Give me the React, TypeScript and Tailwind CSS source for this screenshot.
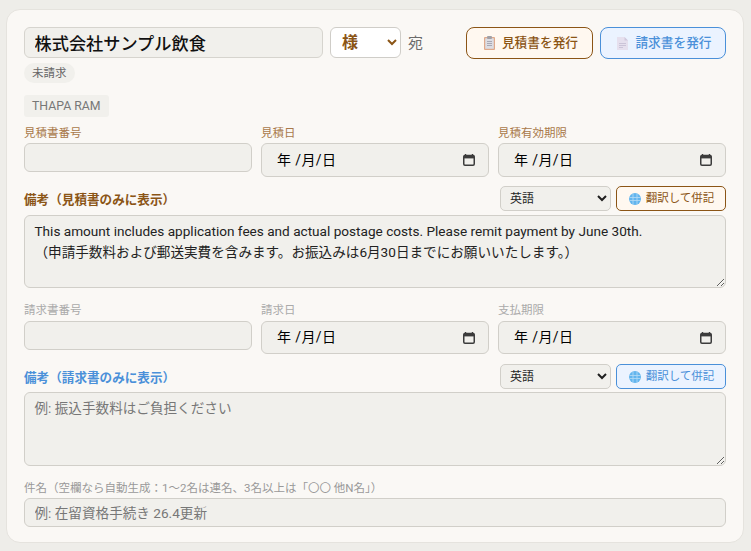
import React from "react";

const font = { fontFamily: '"Roboto","Noto Sans CJK JP",sans-serif' };

function ClipIcon() {
  return (
    <svg width="11" height="14" viewBox="0 0 11 14" className="shrink-0">
      <rect x="0" y="1" width="11" height="13" rx="1" fill="#dfa98a" />
      <rect x="1.2" y="2.2" width="8.6" height="10.6" fill="#dcdde3" />
      <rect x="3" y="0" width="5" height="3" rx="1" fill="#a2a0a6" />
      <path d="M3 5.5h5M3 7.5h5M3 9.5h5" stroke="#a9a8b4" strokeWidth="1" />
    </svg>
  );
}

function DocIcon() {
  return (
    <svg width="11" height="13" viewBox="0 0 11 13" className="shrink-0">
      <path d="M0 0h7.5l3.5 3.5V13H0z" fill="#e6e0ee" />
      <path d="M7.5 0l3.5 3.5H7.5z" fill="#cfc8dc" />
      <path d="M2 6.5h7M2 8.5h7M2 10.5h4" stroke="#cbc4d8" strokeWidth="1" />
    </svg>
  );
}

function GlobeIcon() {
  return (
    <svg width="12" height="12" viewBox="0 0 12 12" className="shrink-0">
      <circle cx="6" cy="6" r="6" fill="#62b5ee" />
      <path d="M0.5 4.5h11M0.5 7.5h11M4 0.8v10.4M8 0.8v10.4" stroke="#b6dcf5" strokeWidth="0.8" fill="none" />
    </svg>
  );
}

function CalendarIcon() {
  return (
    <svg width="12" height="12" viewBox="0 0 12 12" className="shrink-0">
      <path d="M2.5 0v2M9.5 0v2" stroke="#3c3c3c" strokeWidth="1.4" />
      <rect x="0.75" y="1.5" width="10.5" height="9.75" rx="1.2" fill="none" stroke="#3c3c3c" strokeWidth="1.5" />
      <rect x="0.75" y="2" width="10.5" height="2.4" fill="#3c3c3c" />
    </svg>
  );
}

function DateField({ label, labelClass, heightClass, gapClass }: { label: string; labelClass: string; heightClass: string; gapClass: string }) {
  return (
    <div className="flex flex-col">
      <label className={`h-[16px] text-[11.5px] leading-[16px] ${gapClass} ${labelClass}`}>{label}</label>
      <div className={`flex w-full items-center justify-between rounded-md border border-[#d1cfc9] bg-[#f1f0ec] pl-[15px] pr-[13px] text-[14px] tracking-[0.4px] text-black ${heightClass}`}>
        <span className="whitespace-pre">年 /月/日</span>
        <CalendarIcon />
      </div>
    </div>
  );
}

function TextField({ label, labelClass, gapClass }: { label: string; labelClass: string; gapClass: string }) {
  return (
    <div className="flex flex-col">
      <label className={`h-[16px] text-[11.5px] leading-[16px] ${gapClass} ${labelClass}`}>{label}</label>
      <input
        type="text"
        className="h-[29px] w-full rounded-md border border-[#d1cfc9] bg-[#f1f0ec] px-[10px] text-[13.6px] outline-none"
        style={font}
      />
    </div>
  );
}

function TranslateRow({ title, titleClass, btnClass, textClass }: { title: string; titleClass: string; btnClass: string; textClass: string }) {
  return (
    <div className="flex h-[26px] items-start justify-between">
      <span className={`mt-[4px] text-[12.6px] font-bold leading-[20px] ${titleClass}`}>{title}</span>
      <div className="flex items-start gap-[5px]">
        <select
          defaultValue="英語"
          className="h-[25px] w-[111px] rounded-[5px] border border-[#d1cfc9] bg-[#f1f0ec] pl-[5px] text-[12px] text-[#1f1f1f] outline-none"
          style={font}
        >
          <option>英語</option>
        </select>
        <button className={`flex h-[25px] w-[110px] items-center justify-center gap-[5px] rounded-[5px] border pl-[1px] text-[11.5px] ${btnClass}`}>
          <GlobeIcon />
          <span className={textClass}>翻訳して併記</span>
        </button>
      </div>
    </div>
  );
}

export default function App() {
  return (
    <div className="h-[551px] w-[751px] overflow-hidden bg-[#eeede9] pl-[6px] pr-[7px] pt-[9px]" style={font}>
      <div className="h-[534px] rounded-[14px] border border-[#e5e3de] bg-[#faf8f5] px-[17px] pt-[17px]">
        <div className="flex items-start">
          <input
            defaultValue="株式会社サンプル飲食"
            className="h-[31px] w-[299px] rounded-md border border-[#d6d4ce] bg-[#f1f0ec] px-[9.5px] text-[17.2px] font-medium text-[#111] outline-none"
            style={font}
          />
          <select
            defaultValue="様"
            className="ml-[7px] h-[31px] w-[71px] rounded-md border border-[#cfcdc8] bg-white pl-[7px] text-[16px] font-bold text-[#8b5516] outline-none"
            style={font}
          >
            <option>様</option>
          </select>
          <span className="ml-[7px] mt-[6px] text-[15px] leading-[20px] text-[#6b6b6b]">宛</span>
          <div className="ml-auto flex gap-[7px]">
            <button className="flex h-[32px] w-[127px] items-center justify-center gap-[7px] rounded-lg border border-[#8b5516] bg-[#fff8f0] pl-[3px] text-[12.7px] font-medium text-[#8b5516]">
              <ClipIcon />
              見積書を発行
            </button>
            <button className="flex h-[32px] w-[126px] items-center justify-center gap-[7px] rounded-lg border border-[#4a90d9] bg-[#ebf3ff] pl-[3px] text-[12.7px] font-medium text-[#4a90d9]">
              <DocIcon />
              請求書を発行
            </button>
          </div>
        </div>

        <div className="mt-[4px] flex">
          <span className="flex h-[20px] items-center rounded-full bg-[#f1f0ec] px-[8px] pt-[1px] text-[11.5px] text-[#666]">未請求</span>
        </div>
        <div className="mt-[12px] flex">
          <span className="flex h-[22px] items-center rounded-[3px] bg-[#f1f0ec] px-[8px] pt-[1px] text-[12.3px] text-[#777]">THAPA RAM</span>
        </div>

        <div className="mt-[8px] grid grid-cols-3 gap-[9px]">
          <TextField label="見積書番号" labelClass="text-[#a9794a]" gapClass="mb-[2px]" />
          <DateField label="見積日" labelClass="text-[#a9794a]" heightClass="h-[34px]" gapClass="mb-[2px]" />
          <DateField label="見積有効期限" labelClass="text-[#a9794a]" heightClass="h-[34px]" gapClass="mb-[2px]" />
        </div>

        <div className="mt-[9px]">
          <TranslateRow title="備考（見積書のみに表示）" titleClass="text-[#8b5516]" btnClass="border-[#8b5516] bg-[#fff8f0]" textClass="text-[#8b5516]" />
        </div>
        <textarea
          defaultValue={"This amount includes application fees and actual postage costs. Please remit payment by June 30th.\n（申請手数料および郵送実費を含みます。お振込みは6月30日までにお願いいたします。）"}
          className="mt-[3px] block h-[73px] w-full rounded-md border border-[#d1cfc9] bg-[#f1f0ec] px-[9.5px] py-[5px] text-[13.6px] leading-[21px] text-[#222] outline-none"
          style={font}
        />

        <div className="mt-[14px] grid grid-cols-3 gap-[9px]">
          <TextField label="請求書番号" labelClass="text-[#aaa]" gapClass="mb-[3px]" />
          <DateField label="請求日" labelClass="text-[#aaa]" heightClass="h-[33px]" gapClass="mb-[3px]" />
          <DateField label="支払期限" labelClass="text-[#aaa]" heightClass="h-[33px]" gapClass="mb-[3px]" />
        </div>

        <div className="mt-[10px]">
          <TranslateRow title="備考（請求書のみに表示）" titleClass="text-[#4a90d9]" btnClass="border-[#4a90d9] bg-[#ebf3ff]" textClass="text-[#4a90d9]" />
        </div>
        <textarea
          placeholder="例: 振込手数料はご負担ください"
          className="mt-[2px] block h-[74px] w-full rounded-md border border-[#d1cfc9] bg-[#f1f0ec] px-[9.5px] py-[5px] text-[13.6px] leading-[21px] outline-none placeholder:text-[#777]"
          style={font}
        />

        <div className="mt-[14px] h-[16px] text-[11.5px] leading-[16px] text-[#999]">件名（空欄なら自動生成：1〜2名は連名、3名以上は「〇〇 他N名」）</div>
        <input
          placeholder="例: 在留資格手続き 26.4更新"
          className="mt-[2px] block h-[29px] w-full rounded-md border border-[#d1cfc9] bg-[#f1f0ec] px-[9.5px] text-[13.6px] outline-none placeholder:text-[#777]"
          style={font}
        />
      </div>
    </div>
  );
}
